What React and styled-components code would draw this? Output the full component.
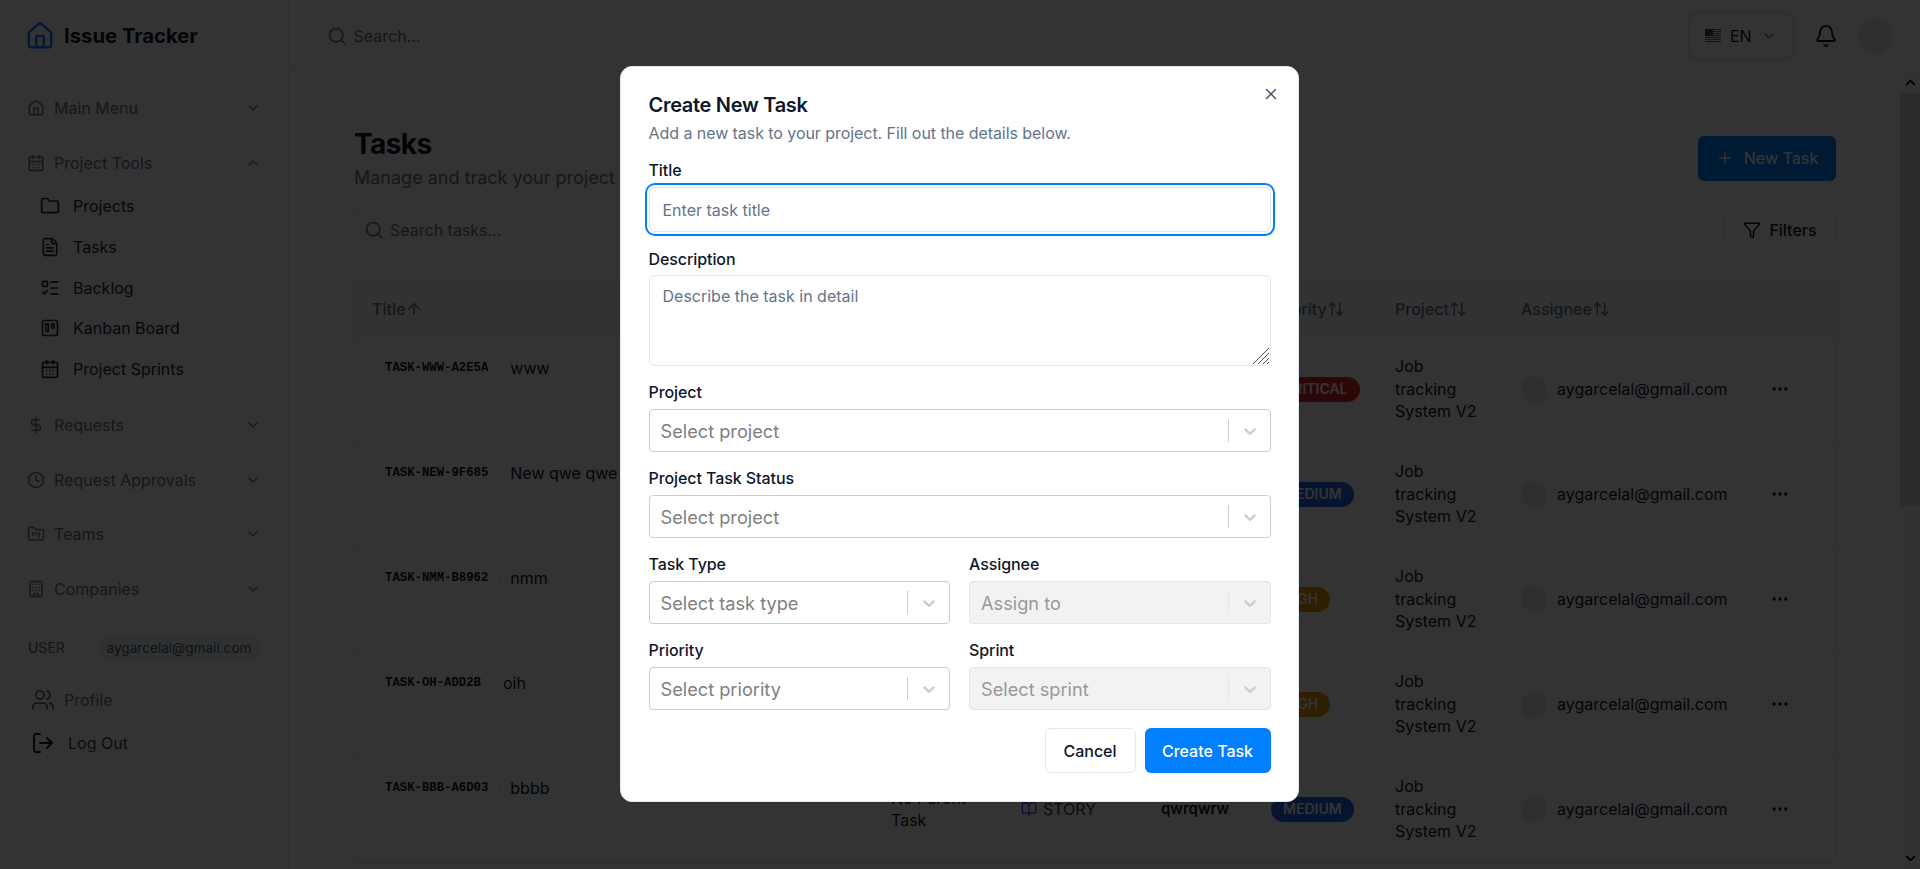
import styled, { createGlobalStyle } from "styled-components";
import {
  ArrowUp,
  ArrowUpDown,
  Bell,
  BookOpen,
  Building,
  CalendarDays,
  ChevronDown,
  ChevronUp,
  Clock,
  DollarSign,
  Ellipsis,
  FileText,
  Filter,
  Folder,
  FolderKanban,
  House,
  ListTodo,
  LogOut,
  Plus,
  Search,
  Users,
  X,
} from "lucide-react";

const GlobalStyle = createGlobalStyle`
  * { box-sizing: border-box; }
  html, body { margin: 0; height: 100%; }
  body {
    font-family: Inter, "Liberation Sans", sans-serif;
    font-size: 16px;
    color: #0f172a;
    background: #fff;
    overflow: hidden;
  }
  input, textarea { font-family: inherit; }
`;

const Page = styled.div`
  height: 100vh;
  display: flex;
  flex-direction: column;
  overflow: hidden;
`;

const TopBar = styled.header`
  height: 72px;
  flex: none;
  display: flex;
  align-items: center;
  border-bottom: 1px solid #e2e8f0;
`;

const Brand = styled.div`
  width: 289px;
  height: 100%;
  flex: none;
  display: flex;
  align-items: center;
  gap: 9px;
  padding-left: 25px;
  border-right: 1px solid #e2e8f0;
  font-size: 20.3px;
  font-weight: 700;
  color: #0f172a;
  svg { color: #0080ff; }
`;

const SearchBox = styled.label`
  height: 45px;
  display: flex;
  align-items: center;
  gap: ${(p) => (p.$grow ? 6 : 7)}px;
  padding: 0 10px 0 ${(p) => (p.$grow ? 9 : 8.5)}px;
  border: 1px solid #e2e8f0;
  border-radius: 8px;
  flex: ${(p) => (p.$grow ? 1 : "none")};
  width: ${(p) => (p.$grow ? "auto" : "342px")};
  margin-left: ${(p) => (p.$grow ? 0 : "28px")};
  svg { color: #64748b; flex: none; }
`;

const SearchInput = styled.input`
  flex: 1;
  min-width: 0;
  padding: 0;
  border: 0;
  outline: 0;
  background: transparent;
  font-size: 16px;
  color: #0f172a;
  &::placeholder { color: #64748b; opacity: 1; }
`;

const TopActions = styled.div`
  margin-left: auto;
  padding-right: 27px;
  display: flex;
  align-items: center;
`;

const LangSelect = styled.div`
  width: 101px;
  height: 44px;
  display: flex;
  align-items: center;
  padding-left: 13px;
  border: 1px solid #e8eef0;
  border-radius: 6px;
  outline: 2px solid #dce8e5;
  outline-offset: 1px;
  color: #0f172a;
  font-size: 16px;
  span { margin: 0 9px; }
  svg.chev { color: #64748b; }
`;

const BellButton = styled.div`
  margin: 0 19px 0 22px;
  height: 24px;
  color: #0f172a;
`;

const Avatar = styled.div`
  width: ${(p) => p.$size}px;
  height: ${(p) => p.$size + (p.$size > 30 ? 0 : 1)}px;
  flex: none;
  border-radius: 50%;
  background: #e8eaee;
`;

const Body = styled.div`
  flex: 1;
  min-height: 0;
  display: flex;
`;

const Sidebar = styled.aside`
  width: 289px;
  flex: none;
  padding-top: 16px;
  border-right: 1px solid #e2e8f0;
`;

const Section = styled.div`
  margin-bottom: 14.5px;
`;

const SectionRow = styled.div`
  height: 40px;
  display: flex;
  align-items: center;
  gap: 9px;
  padding: 0 27px;
  color: #64748b;
  span { flex: 1; }
`;

const SubList = styled.div`
  padding: 3.5px 0 1.2px;
`;

const SubItem = styled.div`
  height: 40.7px;
  display: flex;
  align-items: center;
  gap: 13px;
  padding-left: 40px;
  color: #1e293b;
`;

const UserRow = styled.div`
  margin-top: 26px;
  display: flex;
  align-items: center;
  justify-content: space-between;
  padding: 0 28px;
  font-size: 14px;
  color: #64748b;
`;

const UserLabel = styled.span`
  font-weight: 500;
`;

const UserPill = styled.span`
  height: 26px;
  width: 162px;
  display: flex;
  align-items: center;
  justify-content: center;
  border-radius: 13px;
  background: #f1f5f9;
  color: #475569;
  font-size: 13.6px;
`;

const FooterLink = styled.div`
  height: 30px;
  display: flex;
  align-items: center;
  gap: ${(p) => (p.$danger ? 13 : 9)}px;
  padding-left: 31px;
  margin-top: ${(p) => (p.$danger ? 13 : 24)}px;
  color: ${(p) => (p.$danger ? "#334155" : "#64748b")};
  svg { color: ${(p) => (p.$danger ? "#0f172a" : "#475569")}; }
`;

const Main = styled.main`
  flex: 1;
  min-width: 0;
  padding: 54px 64px 0 65px;
  overflow: hidden;
`;

const PageHead = styled.div`
  display: flex;
  align-items: center;
  justify-content: space-between;
`;

const PageTitle = styled.h1`
  margin: 0 0 2px;
  font-size: 28px;
  line-height: 36px;
  font-weight: 700;
  letter-spacing: -0.6px;
`;

const PageSub = styled.p`
  margin: 0;
  font-size: 18px;
  line-height: 28px;
  color: #64748b;
`;

const PrimaryButton = styled.div`
  width: 138px;
  height: 45px;
  margin-top: -2px;
  display: flex;
  align-items: center;
  justify-content: center;
  gap: 10px;
  border-radius: 6px;
  background: #0080ff;
  color: #fff;
  font-weight: 500;
`;

const FilterRow = styled.div`
  margin-top: 15px;
  display: flex;
  gap: 18px;
`;

const FilterButton = styled.div`
  width: 112px;
  height: 45px;
  display: flex;
  align-items: center;
  justify-content: center;
  gap: 8px;
  border: 1px solid #e2e8f0;
  border-radius: 8px;
  font-weight: 500;
`;

const Table = styled.div`
  margin-top: 28px;
  border: 1px solid #e2e8f0;
  border-radius: 8px;
`;

const rowColumns = "518px 130px 140px 110px 124px 126px 249px 1fr";

const HeadRow = styled.div`
  height: 56px;
  display: grid;
  grid-template-columns: ${rowColumns};
  align-items: center;
  background: #f8fafc;
  border-bottom: 1px solid #e2e8f0;
  border-radius: 8px 8px 0 0;
  color: #64748b;
  font-weight: 500;
`;

const HeadCell = styled.div`
  display: flex;
  align-items: center;
  padding-left: 18px;
  svg { flex: none; }
  &:first-child { padding-left: 17px; }
`;

const TaskRow = styled.div`
  height: 105px;
  display: grid;
  grid-template-columns: ${rowColumns};
  align-items: center;
  border-bottom: 1px solid #e2e8f0;
`;

const Cell = styled.div`
  padding-left: 18px;
  line-height: 22.5px;
`;

const TitleCell = styled(Cell)`
  align-self: start;
  padding-top: 19px;
  padding-left: 17px;
  display: flex;
  align-items: center;
  gap: 9px;
`;

const TaskKey = styled.span`
  height: 24px;
  display: flex;
  align-items: center;
  padding: 0 12px;
  border: 1px solid #e2e8f0;
  border-radius: 12px;
  font-family: "Liberation Mono", monospace;
  font-size: 12.3px;
  font-weight: 700;
`;

const WrapText = styled.div`
  width: ${(p) => p.$width}px;
`;

const TypeLabel = styled.span`
  display: flex;
  align-items: center;
  gap: 6px;
  color: #334155;
  svg { color: #7c3aed; }
`;

const StatusText = styled.span`
  font-size: 15px;
  font-weight: 600;
`;

const Badge = styled.span`
  display: inline-flex;
  align-items: center;
  height: 25px;
  padding: 0 12px;
  border-radius: 13px;
  font-size: 14px;
  font-weight: 600;
  color: #fff;
  background: ${(p) => p.$color};
  vertical-align: middle;
`;

const AssigneeCell = styled(Cell)`
  display: flex;
  align-items: center;
  gap: 10px;
`;

const ActionCell = styled(Cell)`
  display: flex;
  align-items: center;
`;

const ScrollBar = styled.div`
  width: 20px;
  flex: none;
  display: flex;
  flex-direction: column;
  align-items: center;
  background: #f8f8f8;
  color: #000;
  svg { flex: none; margin: 3px 0; }
`;

const ScrollThumb = styled.div`
  width: 100%;
  height: 413px;
  margin-bottom: auto;
  background: #dcdcdc;
`;

const Overlay = styled.div`
  position: fixed;
  inset: 0;
  z-index: 50;
  padding: 0 1px 1px 0;
  display: flex;
  align-items: center;
  justify-content: center;
  background: rgba(0, 0, 0, 0.8);
`;

const Dialog = styled.div`
  position: relative;
  width: 679px;
  padding: 24px 27.5px 28px;
  background: #fff;
  border: 1px solid #e2e8f0;
  border-radius: 12px;
`;

const CloseButton = styled.button`
  position: absolute;
  top: 18px;
  right: 18px;
  padding: 0;
  border: 0;
  background: none;
  color: #475569;
  display: flex;
`;

const DialogTitle = styled.h2`
  margin: 0 0 4px;
  font-size: 20px;
  line-height: 28px;
  font-weight: 600;
  letter-spacing: -0.3px;
`;

const DialogText = styled.p`
  margin: 0 0 17px;
  font-size: 16px;
  line-height: 20px;
  letter-spacing: -0.06px;
  color: #64748b;
`;

const Form = styled.form`
  display: flex;
  flex-direction: column;
  gap: 16px;
`;

const Field = styled.div`
  display: flex;
  flex-direction: column;
  min-width: 0;
`;

const Label = styled.label`
  margin-bottom: 7px;
  font-size: 16px;
  line-height: 20px;
  font-weight: 500;
  letter-spacing: -0.08px;
  color: #0f172a;
`;

const TextInput = styled.input`
  height: 45px;
  margin-bottom: 1px;
  padding: 0 13px;
  border: 1px solid #e2e8f0;
  border-radius: 6px;
  outline: 0;
  box-shadow: 0 0 0 2px #fff, 0 0 0 4px #0080ff;
  font-size: 16px;
  &::placeholder { color: #64748b; opacity: 1; }
`;

const TextAreaWrap = styled.div`
  position: relative;
  display: flex;
  margin-top: -1px;
`;

const TextArea = styled.textarea`
  flex: 1;
  height: 91px;
  padding: 10px 13px;
  border: 1px solid #e2e8f0;
  border-radius: 6px;
  outline: 0;
  font-size: 16px;
  line-height: 20px;
  resize: none;
  &::placeholder { color: #64748b; opacity: 1; }
`;

const ResizeGrip = styled.svg`
  position: absolute;
  right: 1px;
  bottom: 1px;
  width: 18px;
  height: 18px;
  stroke: #555;
  stroke-width: 1;
`;

const TwoCols = styled.div`
  display: grid;
  grid-template-columns: 1fr 1fr;
  column-gap: 19px;
`;

const SelectBox = styled.div`
  height: 43px;
  display: flex;
  align-items: center;
  padding-left: 11px;
  padding-right: 2px;
  border: 1px solid ${(p) => (p.$disabled ? "#e6e6e6" : "#ccc")};
  border-radius: 4px;
  background: ${(p) => (p.$disabled ? "#f2f2f2" : "#fff")};
`;

const SelectValue = styled.span`
  flex: 1;
  font-size: 18.2px;
  color: ${(p) => (p.$disabled ? "#999" : "#808080")};
`;

const SelectDivider = styled.span`
  width: 1px;
  height: 23px;
  margin-right: 3px;
  background: ${(p) => (p.$disabled ? "#e6e6e6" : "#ccc")};
`;

const SelectArrow = styled.svg`
  width: 20px;
  height: 20px;
  margin: 0 8px;
  fill: #ccc;
`;

const DialogFooter = styled.div`
  margin-top: 2px;
  display: flex;
  justify-content: flex-end;
  gap: 9px;
`;

const CancelButton = styled.div`
  width: 91px;
  height: 45px;
  display: flex;
  align-items: center;
  justify-content: center;
  border: 1px solid #e2e8f0;
  border-radius: 6px;
  font-weight: 500;
`;

const SubmitButton = styled(CancelButton)`
  width: 126px;
  border: 0;
  background: #0080ff;
  color: #fff;
`;

// lucide's trello glyph: a square holding a long and a short bar
const BoardIcon = () => (
  <svg width="20" height="20" viewBox="0 0 24 24" fill="none" stroke="currentColor" strokeWidth="2" strokeLinecap="round" strokeLinejoin="round">
    <rect x="3" y="3" width="18" height="18" rx="2" />
    <rect x="7" y="7" width="3" height="9" />
    <rect x="14" y="7" width="3" height="5" />
  </svg>
);

const UsFlag = () => (
  <svg width="16" height="13" viewBox="0 0 16 13">
    <rect width="16" height="13" fill="#fff" />
    {[0, 2, 4, 6, 8, 10, 12].map((y) => (
      <rect key={y} y={y} width="16" height="1" fill="#d22f3c" />
    ))}
    <rect width="8" height="7" fill="#3c3b8e" />
  </svg>
);

const navSections = [
  { label: "Main Menu", icon: House },
  {
    label: "Project Tools",
    icon: CalendarDays,
    open: true,
    items: [
      { label: "Projects", icon: <Folder size={20} /> },
      { label: "Tasks", icon: <FileText size={20} /> },
      { label: "Backlog", icon: <ListTodo size={20} /> },
      { label: "Kanban Board", icon: <BoardIcon /> },
      { label: "Project Sprints", icon: <CalendarDays size={20} /> },
    ],
  },
  { label: "Requests", icon: DollarSign },
  { label: "Request Approvals", icon: Clock },
  { label: "Teams", icon: FolderKanban },
  { label: "Companies", icon: Building },
];

// only the last row's middle columns show below the dialog
const tasks = [
  { key: "TASK-WWW-A2E5A", title: "www", priority: "CRITICAL", color: "#dc2626" },
  { key: "TASK-NEW-9F685", title: "New qwe qwe", priority: "MEDIUM", color: "#2563eb" },
  { key: "TASK-NMM-B8962", title: "nmm", priority: "HIGH", color: "#ea9a0c" },
  { key: "TASK-OH-ADD2B", title: "oih", priority: "HIGH", color: "#ea9a0c" },
  { key: "TASK-BBB-A6D03", title: "bbbb", priority: "MEDIUM", color: "#2563eb", details: true },
];

const SelectField = ({ label, placeholder, disabled }) => (
  <Field>
    <Label>{label}</Label>
    <SelectBox $disabled={disabled}>
      <SelectValue $disabled={disabled}>{placeholder}</SelectValue>
      <SelectDivider $disabled={disabled} />
      <SelectArrow viewBox="0 0 20 20">
        <path d="M4.516 7.548c0.436-0.446 1.043-0.481 1.576 0l3.908 3.747 3.908-3.747c0.533-0.481 1.141-0.446 1.574 0 0.436 0.445 0.408 1.197 0 1.615-0.406 0.418-4.695 4.502-4.695 4.502-0.217 0.223-0.502 0.335-0.787 0.335s-0.57-0.112-0.789-0.335c0 0-4.287-4.084-4.695-4.502s-0.436-1.17 0-1.615z" />
      </SelectArrow>
    </SelectBox>
  </Field>
);

const App = () => {
  return (
    <>
      <GlobalStyle />
      <Page>
        <TopBar>
          <Brand>
            <House size={30} strokeWidth={2} />
            Issue Tracker
          </Brand>
          <SearchBox>
            <Search size={20} />
            <SearchInput placeholder="Search..." />
          </SearchBox>
          <TopActions>
            <LangSelect>
              <UsFlag />
              <span>EN</span>
              <ChevronDown className="chev" size={16} />
            </LangSelect>
            <BellButton>
              <Bell size={24} strokeWidth={1.8} />
            </BellButton>
            <Avatar $size={36} />
          </TopActions>
        </TopBar>
        <Body>
          <Sidebar>
            {navSections.map(({ label, icon: Icon, open, items }) => (
              <Section key={label}>
                <SectionRow>
                  <Icon size={18} />
                  <span>{label}</span>
                  {open ? <ChevronUp size={16} /> : <ChevronDown size={16} />}
                </SectionRow>
                {items && (
                  <SubList>
                    {items.map((item) => (
                      <SubItem key={item.label}>
                        {item.icon}
                        {item.label}
                      </SubItem>
                    ))}
                  </SubList>
                )}
              </Section>
            ))}
            <UserRow>
              <UserLabel>USER</UserLabel>
              <UserPill>aygarcelal@gmail.com</UserPill>
            </UserRow>
            <FooterLink>
              <Users size={24} strokeWidth={1.6} />
              Profile
            </FooterLink>
            <FooterLink $danger>
              <LogOut size={24} strokeWidth={1.8} />
              Log Out
            </FooterLink>
          </Sidebar>
          <Main>
            <PageHead>
              <div>
                <PageTitle>Tasks</PageTitle>
                <PageSub>Manage and track your project</PageSub>
              </div>
              <PrimaryButton>
                <Plus size={18} />
                New Task
              </PrimaryButton>
            </PageHead>
            <FilterRow>
              <SearchBox $grow>
                <Search size={20} />
                <SearchInput placeholder="Search tasks..." />
              </SearchBox>
              <FilterButton>
                <Filter size={18} />
                Filters
              </FilterButton>
            </FilterRow>
            <Table>
              <HeadRow>
                <HeadCell>Title<ArrowUp size={18} /></HeadCell>
                <HeadCell />
                <HeadCell />
                <HeadCell />
                <HeadCell>Priority<ArrowUpDown size={18} /></HeadCell>
                <HeadCell>Project<ArrowUpDown size={18} /></HeadCell>
                <HeadCell>Assignee<ArrowUpDown size={18} /></HeadCell>
                <HeadCell />
              </HeadRow>
              {tasks.map((task) => (
                <TaskRow key={task.key}>
                  <TitleCell>
                    <TaskKey>{task.key}</TaskKey>
                    {task.title}
                  </TitleCell>
                  <Cell>{task.details && <WrapText $width={80}>No Parent Task</WrapText>}</Cell>
                  <Cell>
                    {task.details && (
                      <TypeLabel>
                        <BookOpen size={16} />
                        STORY
                      </TypeLabel>
                    )}
                  </Cell>
                  <Cell>{task.details && <StatusText>qwrqwrw</StatusText>}</Cell>
                  <Cell><Badge $color={task.color}>{task.priority}</Badge></Cell>
                  <Cell><WrapText $width={85}>Job tracking System V2</WrapText></Cell>
                  <AssigneeCell>
                    <Avatar $size={26} />
                    aygarcelal@gmail.com
                  </AssigneeCell>
                  <ActionCell><Ellipsis size={20} /></ActionCell>
                </TaskRow>
              ))}
            </Table>
          </Main>
          <ScrollBar>
            <ChevronUp size={15} strokeWidth={3} />
            <ScrollThumb />
            <ChevronDown size={15} strokeWidth={3} />
          </ScrollBar>
        </Body>
      </Page>
      <Overlay>
        <Dialog>
          <CloseButton type="button">
            <X size={18} />
          </CloseButton>
          <DialogTitle>Create New Task</DialogTitle>
          <DialogText>Add a new task to your project. Fill out the details below.</DialogText>
          <Form>
            <Field>
              <Label>Title</Label>
              <TextInput placeholder="Enter task title" />
            </Field>
            <Field>
              <Label>Description</Label>
              <TextAreaWrap>
                <TextArea placeholder="Describe the task in detail" />
                <ResizeGrip viewBox="0 0 18 18">
                  <path d="M1 17 17 1M6 17 17 6M11 17 17 11M15 17l2-2" />
                </ResizeGrip>
              </TextAreaWrap>
            </Field>
            <SelectField label="Project" placeholder="Select project" />
            <SelectField label="Project Task Status" placeholder="Select project" />
            <TwoCols>
              <SelectField label="Task Type" placeholder="Select task type" />
              <SelectField label="Assignee" placeholder="Assign to" disabled />
            </TwoCols>
            <TwoCols>
              <SelectField label="Priority" placeholder="Select priority" />
              <SelectField label="Sprint" placeholder="Select sprint" disabled />
            </TwoCols>
            <DialogFooter>
              <CancelButton>Cancel</CancelButton>
              <SubmitButton>Create Task</SubmitButton>
            </DialogFooter>
          </Form>
        </Dialog>
      </Overlay>
    </>
  );
};

export default App;
